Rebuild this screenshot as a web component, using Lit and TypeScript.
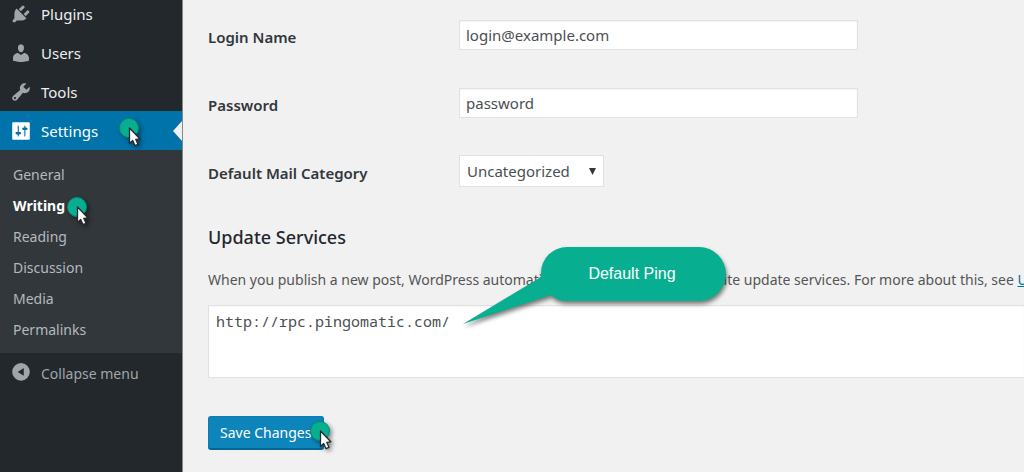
import { LitElement, html, css, svg } from "lit";
import { customElement, property } from "lit/decorators.js";

const icons = {
  plugins: svg`<path d="M13.11 4.36L9.87 7.6 8 5.73l3.24-3.24c.35-.34 1.05-.2 1.56.32.52.51.66 1.21.31 1.55zm-8 1.77l.91-1.12 9.01 9.01-1.19.84c-.71.71-2.63 1.16-3.82 1.16H6.14L4.9 17.26c-.59.59-1.54.59-2.12 0-.59-.58-.59-1.53 0-2.12l1.24-1.24v-3.88c0-1.13.4-3.19 1.09-3.89zm7.26 3.97l3.24-3.24c.34-.35 1.04-.21 1.55.31.52.51.66 1.21.31 1.55l-3.24 3.25z"/>`,
  users: svg`<path d="M10 9.25c-2.27 0-2.73-3.44-2.73-3.44C7 4.02 7.82 2 9.97 2c2.16 0 2.98 2.02 2.71 3.81 0 0-.41 3.44-2.68 3.44zm0 2.57L12.72 10c2.39 0 4.52 2.33 4.52 4.53v2.49s-3.65 1.13-7.24 1.13c-3.65 0-7.24-1.13-7.24-1.13v-2.49c0-2.25 1.94-4.48 4.47-4.48z"/>`,
  tools: svg`<path d="M16.68 9.77c-1.34 1.34-3.3 1.67-4.95.99l-5.41 6.52c-.99.99-2.59.99-3.58 0s-.99-2.59 0-3.57l6.52-5.42c-.68-1.65-.35-3.61.99-4.95 1.28-1.28 3.12-1.62 4.72-1.06l-2.89 2.89 2.82 2.82 2.86-2.87c.53 1.58.18 3.39-1.08 4.65zM3.81 16.21c.4.39 1.04.39 1.43 0 .4-.4.4-1.04 0-1.43-.39-.4-1.03-.4-1.43 0-.39.39-.39 1.03 0 1.43z"/>`,
  settings: svg`<path fill-rule="evenodd" d="M18 17V3c0-.55-.45-1-1-1H3c-.55 0-1 .45-1 1v14c0 .55.45 1 1 1h14c.55 0 1-.45 1-1zM8 11h1c.55 0 1 .45 1 1s-.45 1-1 1l-1 .500V14.500c0 .28-.22.5-.5.5s-.5-.22-.5-.5V13.500L6 13c-.55 0-1-.45-1-1s.45-1 1-1h1V5.500c0-.28.22-.5.5-.5s.5.22.5.5V11zm5-2h-1c-.55 0-1-.45-1-1s.45-1 1-1l1-.500V5.500c0-.28.22-.5.5-.5s.5.22.5.5V6.500l1 .500c.55 0 1 .45 1 1s-.45 1-1 1h-1v5.500c0 .28-.22.5-.5.5s-.5-.22-.5-.5V9z"/>`,
  collapse: svg`<path fill-rule="evenodd" d="M10 1a8 8 0 1 1 0 16 8 8 0 0 1 0-16zM12.500 5.500v7L7 9z"/>`,
};

const menu = [
  { label: "Plugins", icon: icons.plugins },
  { label: "Users", icon: icons.users },
  { label: "Tools", icon: icons.tools },
];
const submenu = ["General", "Writing", "Reading", "Discussion", "Media", "Permalinks"];

/** Green click marker with a mouse arrow. */
@customElement("click-marker")
export class ClickMarker extends LitElement {
  static styles = css`
    :host { display: block; width: 32px; height: 36px; pointer-events: none; }
    svg { display: block; overflow: visible; filter: drop-shadow(2px 2px 2px rgba(0, 0, 0, 0.45)); }
  `;
  render() {
    return html`<svg width="32" height="36" viewBox="0 0 32 36" aria-hidden="true">
      <circle cx="12" cy="12" r="9.500" fill="#08ae90" stroke="#078a74" />
      <path d="M12.500 12v15.500l3.200-3 2.300 5.200 3-1.400-2.200-4.900 4-.6z" fill="#fff" stroke="#252a2e" stroke-width="1.300" stroke-linejoin="round" />
    </svg>`;
  }
}

@customElement("admin-sidebar")
export class AdminSidebar extends LitElement {
  @property() current = "Writing";

  static styles = css`
    :host { display: block; background: #23282d; color: #eee; overflow: hidden; box-sizing: border-box; border-right: 1px solid #85888b; }
    .menu { margin-top: -6px; display: flex; flex-direction: column; }
    .item { display: flex; align-items: center; gap: 9px; height: 39px; padding-left: 10px; font-size: 15px; color: #eee; text-decoration: none; position: relative; }
    .item svg { width: 22px; height: 22px; fill: #a0a5aa; flex: none; }
    .active { background: #0073aa; color: #fff; }
    .active svg { fill: #fff; }
    .active::after { content: ""; position: absolute; right: 0; top: 10px; border: 10px solid transparent; border-left-width: 0; border-right: 9px solid #f1f1f1; }
    .sub { background: #32373c; padding: 9px 0 8px; display: flex; flex-direction: column; }
    .link { height: 31px; display: flex; align-items: center; padding-left: 13px; font-size: 14px; color: #b4b9be; text-decoration: none; }
    .link.current { color: #fff; font-weight: 700; }
    .here { position: relative; }
    .here click-marker { position: absolute; left: 100%; top: -1px; }
    .on-item { position: absolute; left: 117px; top: 5px; }
    .collapse { display: flex; align-items: center; gap: 9px; height: 40px; width: 100%; padding: 0 0 0 10px; border: 0; background: none; color: #a0a5aa; font: inherit; font-size: 14px; }
    .collapse svg { width: 22px; height: 22px; fill: #a0a5aa; flex: none; }
  `;

  render() {
    return html`<nav class="menu" aria-label="Main menu">
      ${menu.map((m) => html`<a class="item" href="#"><svg viewBox="0 0 20 20" aria-hidden="true">${m.icon}</svg>${m.label}</a>`)}
      <a class="item active" href="#"><svg viewBox="0 0 20 20" aria-hidden="true">${icons.settings}</svg>Settings<click-marker class="on-item"></click-marker></a>
      <div class="sub">
        ${submenu.map((s) => s === this.current
          ? html`<a class="link current" href="#" aria-current="page"><span class="here">${s}<click-marker></click-marker></span></a>`
          : html`<a class="link" href="#">${s}</a>`)}
      </div>
      <button class="collapse" type="button"><svg viewBox="0 0 20 20" aria-hidden="true">${icons.collapse}</svg>Collapse menu</button>
    </nav>`;
  }
}

@customElement("writing-form")
export class WritingForm extends LitElement {
  static styles = css`
    :host { display: block; min-width: 0; overflow: hidden; padding-left: 25px; color: #555; }
    .row { display: grid; grid-template-columns: 251px minmax(0, 399px); align-items: center; height: 68px; }
    .rows { padding-top: 1px; }
    .row label { font-size: 15px; font-weight: 600; color: #32373c; padding-top: 4px; }
    .field { box-sizing: border-box; width: 100%; height: 30px; padding: 0 6px; border: 1px solid #e0e2e2; background: #fff; color: #4a4f54; font: inherit; font-size: 15px; box-shadow: inset 0 1px 2px rgba(0, 0, 0, 0.05); }
    .pick { position: relative; justify-self: start; width: 145px; }
    .pick select { height: 32px; padding: 0 7px; appearance: none; border-radius: 0; box-shadow: none; }
    .pick svg { position: absolute; right: 8px; top: 13px; pointer-events: none; }
    h2 { margin: 20px 0 0; font-size: 18px; line-height: 24px; font-weight: 500; color: #23282d; }
    .about { margin: 21px 0 15px; font-size: 14px; line-height: 20px; white-space: nowrap; }
    .about a { color: #0073aa; }
    .services { position: relative; display: flex; }
    textarea { box-sizing: border-box; width: 100%; height: 73px; resize: none; padding: 4px 7px; border: 1px solid #e0e2e2; border-right: 0; border-radius: 0; background: #fff; color: #4a4f54; font: 15px/22px "Noto Sans Mono", "DejaVu Sans Mono", "Liberation Mono", monospace; box-shadow: inset 0 1px 2px rgba(0, 0, 0, 0.05); }
    .callout { position: absolute; left: 255px; top: -58px; width: 264px; height: 80px; }
    .callout svg { position: absolute; inset: 0; overflow: visible; filter: drop-shadow(1px 3px 2px rgba(0, 0, 0, 0.5)); }
    .callout span { position: absolute; left: 74px; right: 0; top: 0; line-height: 54px; text-align: center; color: #fff; font-family: "Liberation Sans", Arial, sans-serif; font-size: 16px; }
    .submit { position: relative; width: fit-content; margin-top: 38px; }
    .save { display: block; height: 33px; width: 116px; padding: 0 0 0 11px; text-align: left; border: 1px solid #0e7cb0; border-bottom-color: #006799; border-radius: 3px; background: #0e85ba; color: #fff; font: inherit; font-size: 14px; box-shadow: 0 1px 0 #006799; white-space: nowrap; }
    .submit click-marker { position: absolute; left: 100px; top: 3px; }
  `;

  render() {
    return html`<form>
      <div class="rows">
        <div class="row"><label for="login">Login Name</label><input class="field" id="login" type="text" value="login@example.com" /></div>
        <div class="row"><label for="pass">Password</label><input class="field" id="pass" type="text" value="password" /></div>
        <div class="row"><label for="cat">Default Mail Category</label>
          <div class="pick"><select class="field" id="cat"><option>Uncategorized</option></select>
            <svg width="7" height="7" viewBox="0 0 7 7" aria-hidden="true"><path d="M0 0h7L3.500 7z" fill="#32373c" /></svg></div>
        </div>
      </div>
      <h2>Update Services</h2>
      <p class="about"><label for="ping">When you publish a new post, WordPress automatically notifies the following site update services. For more about this, see</label> <a href="#">Update Services</a></p>
      <div class="services">
        <textarea id="ping" .value=${"http://rpc.pingomatic.com/"}></textarea>
        <div class="callout">
          <svg width="264" height="80" viewBox="0 0 264 80" aria-hidden="true"><path d="M104 0H236A27 27 0 0 1 236 54H104Q94 54 88 48L0 77 78 30V26A26 26 0 0 1 104 0z" fill="#08ae90" /></svg>
          <span>Default Ping</span>
        </div>
      </div>
      <div class="submit"><button class="save" type="button">Save Changes</button><click-marker></click-marker></div>
    </form>`;
  }
}

@customElement("app-root")
export class AppRoot extends LitElement {
  static styles = css`
    :host { display: grid; grid-template-columns: 183px minmax(0, 1fr); min-height: 100vh; background: #f1f1f1; font-family: "Noto Sans", "Open Sans", sans-serif; }
  `;
  render() {
    return html`<admin-sidebar></admin-sidebar><writing-form></writing-form>`;
  }
}
